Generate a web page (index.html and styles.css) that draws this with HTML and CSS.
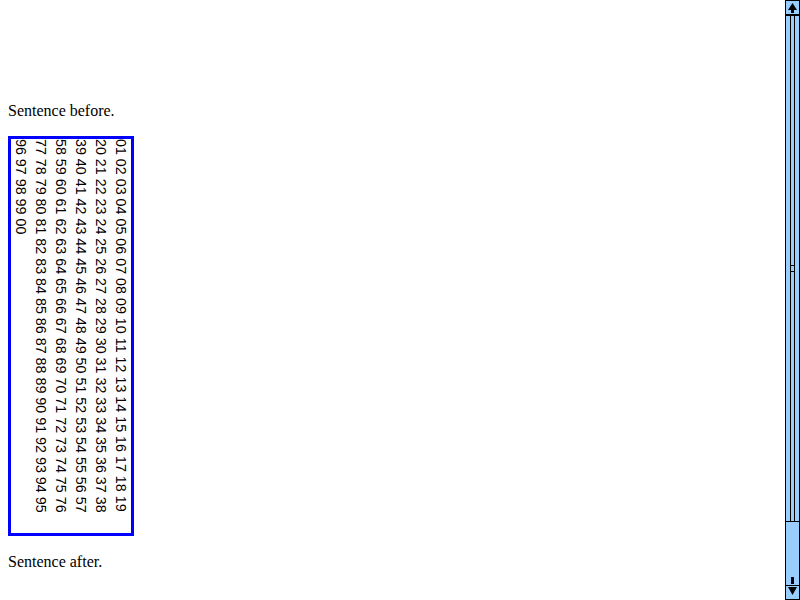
FILE: index.html
```html
<!DOCTYPE html>
<html>
<head>
<meta charset="utf-8">
<link rel="stylesheet" href="styles.css">
</head>
<body>
<div class="top-space"></div>
<p class="sentence">Sentence before.</p>
<div class="vbox">01 02 03 04 05 06 07 08 09 10 11 12 13 14 15 16 17 18 19 20 21 22 23 24 25 26 27 28 29 30 31 32 33 34 35 36 37 38 39 40 41 42 43 44 45 46 47 48 49 50 51 52 53 54 55 56 57 58 59 60 61 62 63 64 65 66 67 68 69 70 71 72 73 74 75 76 77 78 79 80 81 82 83 84 85 86 87 88 89 90 91 92 93 94 95 96 97 98 99 00</div>
<p class="sentence">Sentence after.</p>

<div class="scrollbar">
  <div class="sb-btn">
    <svg width="13" height="13" viewBox="1 1 13 13"><polygon points="7.5,3 3,10 12,10" fill="#000"/><rect x="6" y="10" width="3" height="3" fill="#000"/></svg>
  </div>
  <div class="sb-track">
    <div class="sb-thumb"></div>
    <div class="sb-stem"></div>
  </div>
  <div class="sb-btn">
    <svg width="13" height="13" viewBox="1 1 13 13"><polygon points="3,2 12,2 7.5,10" fill="#000"/></svg>
  </div>
</div>
</body>
</html>
```
FILE: styles.css
```css
html {
  background: #ffffff;
}
body {
  margin: 8px;
  font-family: "Liberation Serif", serif;
  font-size: 16px;
  color: #000000;
}
.top-space {
  height: 94px;
}
.sentence {
  margin: 0;
  line-height: 18px;
}
.vbox {
  writing-mode: vertical-rl;
  font-family: "Liberation Sans", sans-serif;
  font-size: 14.3px;
  line-height: 20px;
  border: 3px solid #0000ff;
  height: 392px;
  padding-bottom: 2px;
  width: 120px;
  margin: 16px 0 17px 0;
}

/* fake scrollbar overlay */
.scrollbar {
  position: fixed;
  top: 0;
  right: 0;
  width: 15px;
  height: 600px;
  background: #99ccff;
  display: flex;
  flex-direction: column;
}
.sb-btn {
  height: 15px;
  flex: 0 0 15px;
  box-sizing: border-box;
  border: 1px solid #000000;
  background: #99ccff;
}
.sb-btn svg {
  display: block;
}
.sb-track {
  flex: 1 1 auto;
  box-sizing: border-box;
  border-left: 1px solid #000000;
  border-right: 1px solid #000000;
  display: flex;
  flex-direction: column;
}
.sb-thumb {
  height: 507px;
  flex: 0 0 507px;
  box-sizing: border-box;
  margin: 0 -1px;
  border: 1px solid #000000;
  background-color: #99ccff;
  background-image:
    linear-gradient(#000000, #000000),
    linear-gradient(#000000, #000000),
    linear-gradient(#000000, #000000),
    linear-gradient(#000000, #000000);
  background-repeat: no-repeat;
  background-size: 1px 100%, 1px 100%, 5px 1px, 5px 1px;
  background-position: 4px 0, 8px 0, 4px calc(50% - 3px), 4px calc(50% + 3px);
}
.sb-stem {
  margin-top: auto;
  margin-bottom: 1px;
  align-self: center;
  width: 3px;
  height: 7px;
  background: #000000;
}
```
